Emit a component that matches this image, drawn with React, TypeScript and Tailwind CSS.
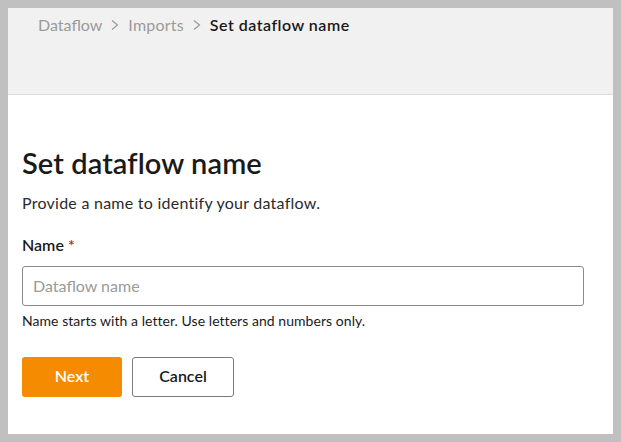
import React from "react";

function Chevron() {
  return (
    <svg width="10" height="16" viewBox="0 0 10 16" className="mx-[8px] shrink-0" aria-hidden>
      <path d="M2 3.5 L7.5 8 L2 12.5" fill="none" stroke="#9a9a9a" strokeWidth="1.2" />
    </svg>
  );
}

export default function App() {
  return (
    <div
      className="w-[621px] h-[442px] bg-[#c0c0c0] p-2"
      style={{ fontFamily: '"Source Sans Pro", Lato, "Noto Sans", sans-serif' }}
    >
      <div className="w-full h-full bg-white flex flex-col">
        <div className="h-[87px] bg-[#f1f1f1] border-b border-[#dcdcdc] pl-[30px] pt-[5px]">
          <nav className="flex items-center text-[16px] leading-[24px]">
            <span className="text-[#9a9a9a]">Dataflow</span>
            <Chevron />
            <span className="text-[#9a9a9a] tracking-[0.2px]">Imports</span>
            <Chevron />
            <span className="text-[#1a1a1a] font-semibold tracking-[0.5px]">Set dataflow name</span>
          </nav>
        </div>
        <div className="flex flex-col px-[14px] pt-[50px]">
          <h1 className="text-[29px] leading-[36px] font-semibold text-[#1a1a1a] tracking-[0.1px]">Set dataflow name</h1>
          <p className="mt-[10px] text-[16px] leading-[24px] text-[#2b2b2b] tracking-[0.25px]">
            Provide a name to identify your dataflow.
          </p>
          <label className="mt-[18px] text-[16px] leading-[24px] font-semibold text-[#1a1a1a]">
            Name <span className="text-[#a4262c]">*</span>
          </label>
          <input
            className="mt-[9px] w-[562px] h-[40px] border border-[#8a8a8a] rounded-[3px] px-[10px] pb-[2px] text-[16px] placeholder:text-[#9a9a9a] outline-none"
            placeholder="Dataflow name"
          />
          <p className="mt-[5px] text-[14px] leading-[20px] text-[#1a1a1a] tracking-[0.05px]">
            Name starts with a letter. Use letters and numbers only.
          </p>
          <div className="mt-[26px] flex gap-[10px]">
            <button className="w-[100px] h-[40px] rounded-[3px] bg-[#f58b00] text-white font-semibold text-[16px] pb-[2px]">
              Next
            </button>
            <button className="w-[102px] h-[40px] rounded-[3px] border border-[#7a7a7a] bg-white text-[#1a1a1a] font-semibold text-[16px] pb-[2px]">
              Cancel
            </button>
          </div>
        </div>
      </div>
    </div>
  );
}
